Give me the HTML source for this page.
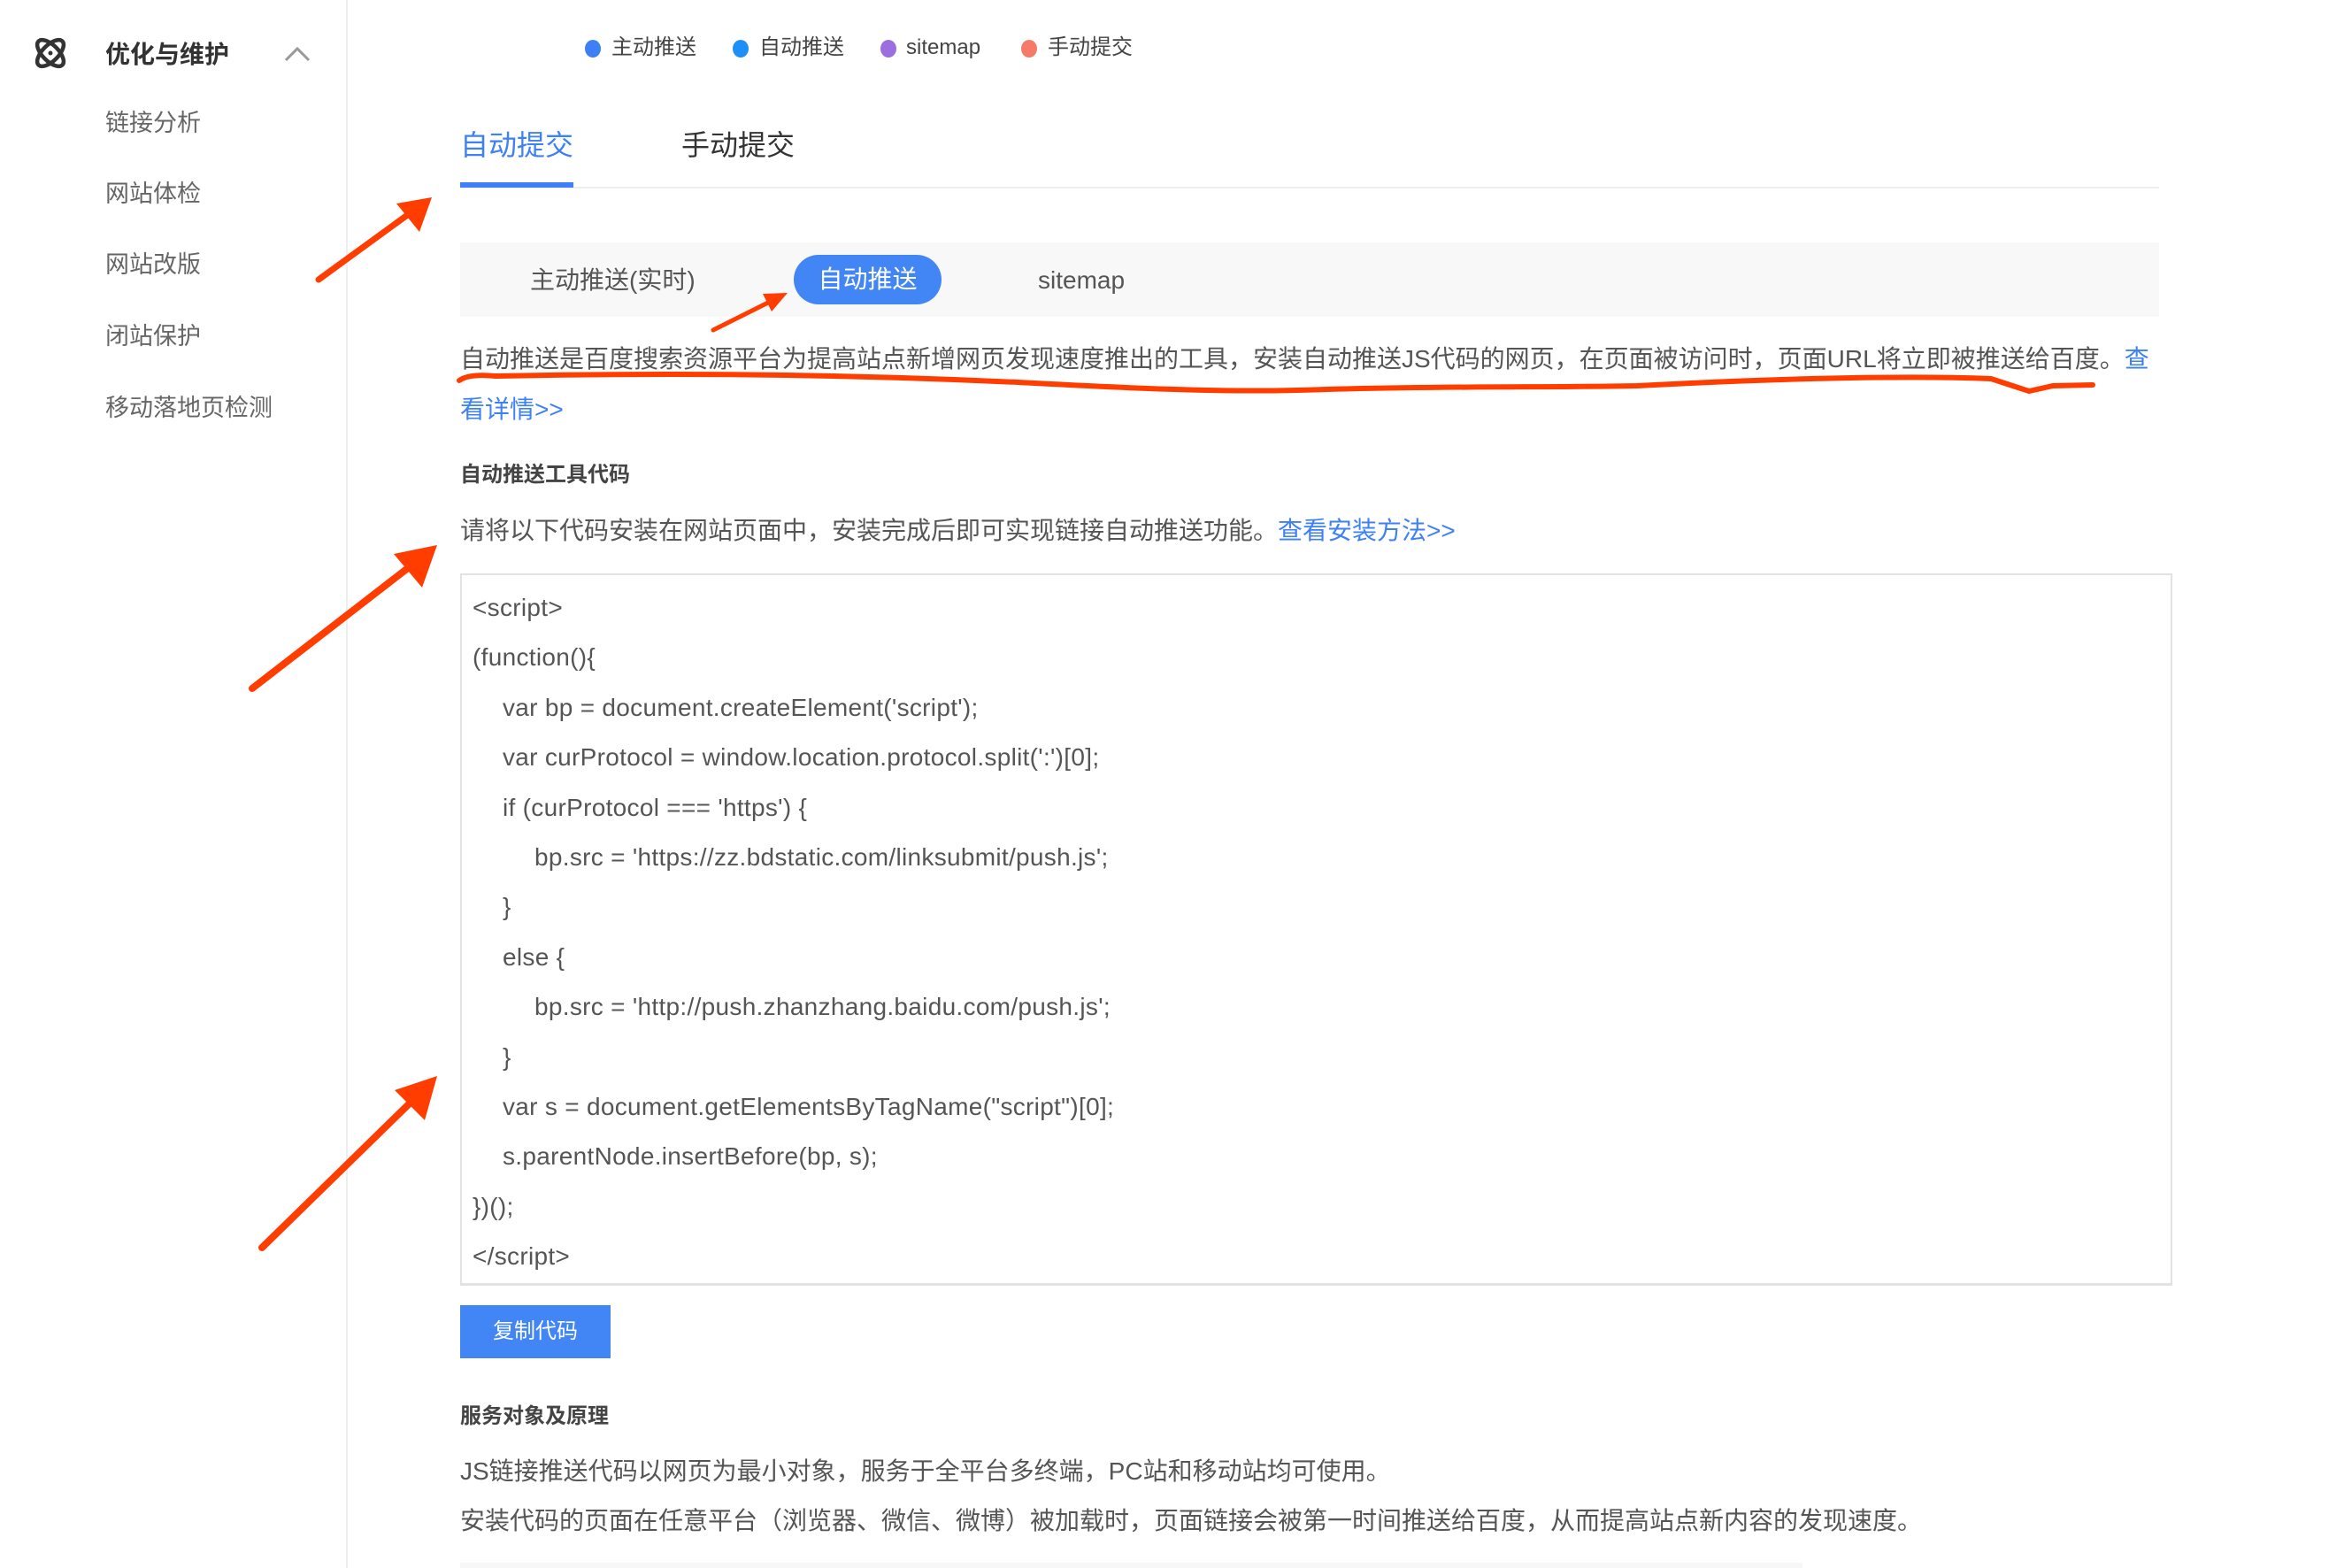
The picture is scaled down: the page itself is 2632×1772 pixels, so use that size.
<!DOCTYPE html>
<html><head><meta charset="utf-8">
<style>
*{margin:0;padding:0;box-sizing:border-box}
body{width:2632px;height:1772px;background:#fff;position:relative;overflow:hidden;font-family:"Liberation Sans","Noto Sans CJK SC",sans-serif;color:#555}
.a{position:absolute;white-space:nowrap}
.side{position:absolute;left:0;top:0;width:393px;height:1772px;border-right:2px solid #eee}
.mi{position:absolute;left:119px;font-size:27px;line-height:40px;color:#666}
.dot{position:absolute;width:18px;height:20px;border-radius:50%}
.lg{position:absolute;font-size:24px;line-height:30px;top:39px;color:#444}
.code{position:absolute;font-size:28px;line-height:40px;color:#555;letter-spacing:0.3px}
.blue{color:#3e80f6}
</style></head><body>
<div class="side"></div>
<svg class="a" style="left:36px;top:40px" width="42" height="40" viewBox="0 0 42 40">
<ellipse cx="21" cy="20" rx="19" ry="9" transform="rotate(45 21 20)" fill="none" stroke="#333" stroke-width="4.5"/>
<ellipse cx="21" cy="20" rx="19" ry="9" transform="rotate(-45 21 20)" fill="none" stroke="#333" stroke-width="4.5"/>
<circle cx="21" cy="20" r="2.5" fill="#333"/></svg>
<div class="a" style="left:119px;top:42px;font-size:28px;line-height:40px;font-weight:bold;color:#333">优化与维护</div>
<svg class="a" style="left:320px;top:50px" width="32" height="22"><path d="M3 18 L16 5 L29 18" fill="none" stroke="#999" stroke-width="3"/></svg>
<div class="mi" style="top:119px">链接分析</div>
<div class="mi" style="top:199px">网站体检</div>
<div class="mi" style="top:279px">网站改版</div>
<div class="mi" style="top:360px">闭站保护</div>
<div class="mi" style="top:441px">移动落地页检测</div>

<div class="dot" style="left:661px;top:45px;background:#3d7ff5"></div><div class="lg" style="left:691px">主动推送</div>
<div class="dot" style="left:828px;top:45px;background:#1e8ff7"></div><div class="lg" style="left:858px">自动推送</div>
<div class="dot" style="left:995px;top:45px;background:#9b6fe0"></div><div class="lg" style="left:1024px">sitemap</div>
<div class="dot" style="left:1154px;top:45px;background:#f57a6a"></div><div class="lg" style="left:1184px">手动提交</div>

<div class="a blue" style="left:520px;top:142px;font-size:32px;line-height:44px">自动提交</div>
<div class="a" style="left:770px;top:142px;font-size:32px;line-height:44px;color:#333">手动提交</div>
<div class="a" style="left:520px;top:211px;width:1920px;height:2px;background:#eee"></div>
<div class="a" style="left:520px;top:206px;width:128px;height:6px;background:#3e80f6"></div>

<div class="a" style="left:520px;top:274px;width:1920px;height:84px;background:#f8f8f8"></div>
<div class="a" style="left:599px;top:297px;font-size:28px;line-height:40px;color:#555">主动推送(实时)</div>
<div class="a" style="left:897px;top:288px;width:167px;height:56px;border-radius:28px;background:#4285f4;color:#fff;font-size:28px;line-height:56px;text-align:center">自动推送</div>
<div class="a" style="left:1173px;top:297px;font-size:28px;line-height:40px;color:#555">sitemap</div>

<div class="a" style="left:520px;top:386px;font-size:28px;line-height:40px;color:#555">自动推送是百度搜索资源平台为提高站点新增网页发现速度推出的工具，安装自动推送JS代码的网页，在页面被访问时，页面URL将立即被推送给百度。<span class="blue">查</span></div>
<div class="a blue" style="left:520px;top:443px;font-size:28px;line-height:40px">看详情&gt;&gt;</div>
<div class="a" style="left:520px;top:521px;font-size:24px;line-height:32px;font-weight:bold;color:#444">自动推送工具代码</div>
<div class="a" style="left:520px;top:580px;font-size:28px;line-height:40px;color:#555">请将以下代码安装在网站页面中，安装完成后即可实现链接自动推送功能。<span class="blue">查看安装方法&gt;&gt;</span></div>

<div class="a" style="left:520px;top:648px;width:1935px;height:805px;border:2px solid #e2e2e2;border-bottom-width:3px"></div>
<div class="code" style="left:534px;top:667px">&lt;script&gt;</div>
<div class="code" style="left:534px;top:723px">(function(){</div>
<div class="code" style="left:568px;top:780px">var bp = document.createElement('script');</div>
<div class="code" style="left:568px;top:836px">var curProtocol = window.location.protocol.split(':')[0];</div>
<div class="code" style="left:568px;top:893px">if (curProtocol === 'https') {</div>
<div class="code" style="left:604px;top:949px">bp.src = 'https://zz.bdstatic.com/linksubmit/push.js';</div>
<div class="code" style="left:568px;top:1005px">}</div>
<div class="code" style="left:568px;top:1062px">else {</div>
<div class="code" style="left:604px;top:1118px">bp.src = 'http://push.zhanzhang.baidu.com/push.js';</div>
<div class="code" style="left:568px;top:1175px">}</div>
<div class="code" style="left:568px;top:1231px">var s = document.getElementsByTagName("script")[0];</div>
<div class="code" style="left:568px;top:1287px">s.parentNode.insertBefore(bp, s);</div>
<div class="code" style="left:534px;top:1344px">})();</div>
<div class="code" style="left:534px;top:1400px">&lt;/script&gt;</div>

<div class="a" style="left:520px;top:1475px;width:170px;height:60px;background:#4285f4;color:#fff;font-size:24px;line-height:60px;text-align:center">复制代码</div>
<div class="a" style="left:520px;top:1585px;font-size:24px;line-height:32px;font-weight:bold;color:#444">服务对象及原理</div>
<div class="a" style="left:520px;top:1643px;font-size:28px;line-height:40px;color:#555">JS链接推送代码以网页为最小对象，服务于全平台多终端，PC站和移动站均可使用。</div>
<div class="a" style="left:520px;top:1699px;font-size:28px;line-height:40px;color:#555">安装代码的页面在任意平台（浏览器、微信、微博）被加载时，页面链接会被第一时间推送给百度，从而提高站点新内容的发现速度。</div>
<div class="a" style="left:520px;top:1766px;width:1517px;height:6px;background:#f7f7f7"></div>

<svg class="a" style="left:0;top:0" width="2632" height="1772">
<g fill="none" stroke="#ff3d00" stroke-linecap="round">
<path d="M519 430 Q530 422 560 425 C800 420 1000 425 1150 432 C1300 440 1400 444 1500 440 C1650 436 1750 438 1850 436 C2000 428 2150 424 2250 428 L2293 442 L2320 436 L2365 435" stroke-width="6"/>
<line x1="360" y1="316" x2="470" y2="236" stroke-width="7"/>
<line x1="806" y1="373" x2="872" y2="340" stroke-width="5"/>
<line x1="285" y1="778" x2="470" y2="635" stroke-width="8"/>
<line x1="296" y1="1410" x2="472" y2="1238" stroke-width="8"/>
</g>
<g fill="#ff3d00">
<polygon points="488,223 474,262 448,230"/>
<polygon points="890,331 872,352 862,332"/>
<polygon points="494,616 477,664 445,626"/>
<polygon points="494,1216 480,1266 446,1232"/>
</g>
</svg>
</body></html>
